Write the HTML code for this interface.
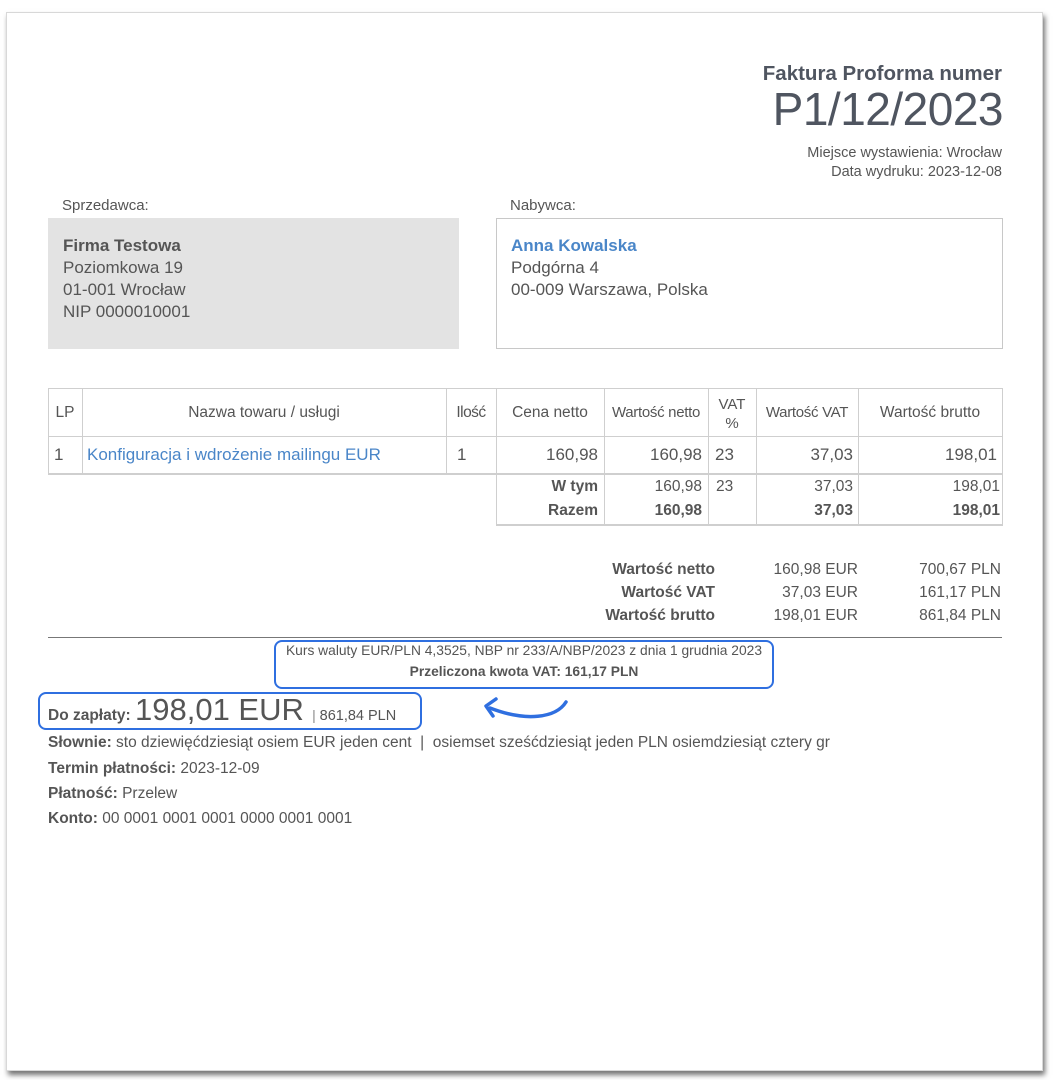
<!DOCTYPE html>
<html><head><meta charset="utf-8"><style>
html,body{margin:0;padding:0;background:#fff;width:1056px;height:1080px;overflow:hidden;font-family:"Liberation Sans",Arial,sans-serif;color:#555}
.page{position:absolute;left:6px;top:12px;width:1035px;height:1057px;background:#fff;border:1px solid #d8d8d8;box-shadow:2px 4px 5px rgba(0,0,0,.55)}
.t{position:absolute;white-space:nowrap;line-height:1}
.r{text-align:right}
.b{font-weight:bold}
.blue{color:#4a86c8}
.l{position:absolute;background:#cfcfcf}
</style></head><body>
<div class="page"></div>

<div class="t b r" style="right:54px;top:64px;font-size:20.5px;color:#4f5560">Faktura Proforma numer</div>
<div class="t r" style="right:53px;top:86px;font-size:46px;color:#4f5560;letter-spacing:-0.5px">P1/12/2023</div>
<div class="t r" style="right:54px;top:146px;font-size:14.5px">Miejsce wystawienia: Wrocław</div>
<div class="t r" style="right:54px;top:165px;font-size:14.5px">Data wydruku: 2023-12-08</div>

<div class="t" style="left:62px;top:198px;font-size:15px">Sprzedawca:</div>
<div class="t" style="left:510px;top:198px;font-size:15px">Nabywca:</div>
<div style="position:absolute;left:48px;top:218px;width:411px;height:131px;background:#e3e3e3"></div>
<div style="position:absolute;left:496px;top:218px;width:505px;height:129px;border:1px solid #c8c8c8"></div>
<div class="t" style="left:63px;top:235px;font-size:17px;line-height:22px">
<b>Firma Testowa</b><br>Poziomkowa 19<br>01-001 Wrocław<br>NIP 0000010001</div>
<div class="t" style="left:511px;top:235px;font-size:17px;line-height:22px">
<b class="blue">Anna Kowalska</b><br>Podgórna 4<br>00-009 Warszawa, Polska</div>

<div class="l" style="left:48px;top:388px;width:955px;height:1px"></div>
<div class="l" style="left:48px;top:436px;width:955px;height:1px"></div>
<div class="l" style="left:48px;top:473px;width:955px;height:2px"></div>
<div class="l" style="left:496px;top:524px;width:507px;height:2px"></div>
<div class="l" style="left:48px;top:388px;width:1px;height:86px"></div>
<div class="l" style="left:82px;top:388px;width:1px;height:86px"></div>
<div class="l" style="left:446px;top:388px;width:1px;height:86px"></div>
<div class="l" style="left:496px;top:388px;width:1px;height:137px"></div>
<div class="l" style="left:604px;top:388px;width:1px;height:137px"></div>
<div class="l" style="left:708px;top:388px;width:1px;height:137px"></div>
<div class="l" style="left:756px;top:388px;width:1px;height:137px"></div>
<div class="l" style="left:858px;top:388px;width:1px;height:137px"></div>
<div class="l" style="left:1002px;top:388px;width:1px;height:137px"></div>

<div class="t" style="left:48px;width:34px;text-align:center;top:405px;font-size:15.5px">LP</div>
<div class="t" style="left:82px;width:364px;text-align:center;top:405px;font-size:15.5px">Nazwa towaru / usługi</div>
<div class="t" style="left:446px;width:50px;text-align:center;top:405px;font-size:15.5px;letter-spacing:-0.5px">Ilość</div>
<div class="t" style="left:496px;width:108px;text-align:center;top:405px;font-size:15.5px">Cena netto</div>
<div class="t" style="left:604px;width:104px;text-align:center;top:405px;font-size:15px;letter-spacing:-0.3px">Wartość netto</div>
<div class="t" style="left:708px;width:48px;top:395px;font-size:15px;text-align:center;line-height:19px">VAT<br>%</div>
<div class="t" style="left:756px;width:102px;text-align:center;top:405px;font-size:15px;letter-spacing:-0.3px">Wartość VAT</div>
<div class="t" style="left:858px;width:144px;text-align:center;top:405px;font-size:15.5px">Wartość brutto</div>

<div class="t" style="left:54px;top:446px;font-size:17px">1</div>
<div class="t blue" style="left:87px;top:446px;font-size:17px">Konfiguracja i wdrożenie mailingu EUR</div>
<div class="t" style="left:457px;top:446px;font-size:17px">1</div>
<div class="t r" style="right:458px;top:446px;font-size:17px">160,98</div>
<div class="t r" style="right:354px;top:446px;font-size:17px">160,98</div>
<div class="t" style="left:715px;top:446px;font-size:17px">23</div>
<div class="t r" style="right:203px;top:446px;font-size:17px">37,03</div>
<div class="t r" style="right:59px;top:446px;font-size:17px">198,01</div>

<div class="t b r" style="right:458px;top:479px;font-size:15.5px">W tym</div>
<div class="t r" style="right:354px;top:479px;font-size:15.5px">160,98</div>
<div class="t" style="left:716px;top:479px;font-size:15.5px">23</div>
<div class="t r" style="right:203px;top:479px;font-size:15.5px">37,03</div>
<div class="t r" style="right:56px;top:479px;font-size:15.5px">198,01</div>
<div class="t b r" style="right:458px;top:503px;font-size:15.5px">Razem</div>
<div class="t b r" style="right:354px;top:503px;font-size:15.5px">160,98</div>
<div class="t b r" style="right:203px;top:503px;font-size:15.5px">37,03</div>
<div class="t b r" style="right:56px;top:503px;font-size:15.5px">198,01</div>

<div class="t b r" style="right:341px;top:558px;font-size:15.5px;line-height:23px">Wartość netto<br>Wartość VAT<br>Wartość brutto</div>
<div class="t r" style="right:198px;top:558px;font-size:15.5px;line-height:23px">160,98 EUR<br>37,03 EUR<br>198,01 EUR</div>
<div class="t r" style="right:55px;top:558px;font-size:15.5px;line-height:23px">700,67 PLN<br>161,17 PLN<br>861,84 PLN</div>

<div style="position:absolute;left:48px;top:637px;width:954px;height:1px;background:#777"></div>

<div style="position:absolute;left:274px;top:640px;width:496px;height:45px;border:2px solid #2f6fe0;border-radius:8px"></div>
<div class="t" style="left:276px;width:496px;text-align:center;top:644px;font-size:13.8px">Kurs waluty EUR/PLN 4,3525, NBP nr 233/A/NBP/2023 z dnia 1 grudnia 2023</div>
<div class="t b" style="left:276px;width:496px;text-align:center;top:665px;font-size:13.8px">Przeliczona kwota VAT: 161,17 PLN</div>

<div style="position:absolute;left:38px;top:692px;width:380px;height:34px;border:2px solid #2f6fe0;border-radius:8px"></div>
<div class="t" style="left:48px;top:695px;font-size:15.5px;line-height:30px"><b>Do zapłaty:</b> <span style="font-size:31px">198,01 EUR</span> <span style="font-size:14px;color:#888">&nbsp;|&nbsp;</span><span style="font-size:14.5px">861,84 PLN</span></div>

<svg style="position:absolute;left:478px;top:696px" width="96" height="30" viewBox="0 0 96 30">
<path d="M88 6 C78 22 48 26 12 12" fill="none" stroke="#2f6fe0" stroke-width="3.5" stroke-linecap="round"/>
<path d="M18 3 L8 10 L15 20" fill="none" stroke="#2f6fe0" stroke-width="3.5" stroke-linecap="round" stroke-linejoin="round"/>
</svg>

<div class="t" style="left:48px;top:735px;font-size:15.5px"><b>Słownie:</b> sto dziewięćdziesiąt osiem EUR jeden cent &nbsp;| &nbsp;osiemset sześćdziesiąt jeden PLN osiemdziesiąt cztery gr</div>
<div class="t" style="left:48px;top:761px;font-size:15.5px"><b>Termin płatności:</b> 2023-12-09</div>
<div class="t" style="left:48px;top:786px;font-size:15.5px"><b>Płatność:</b> Przelew</div>
<div class="t" style="left:48px;top:811px;font-size:15.5px"><b>Konto:</b> 00 0001 0001 0001 0000 0001 0001</div>
</body></html>
